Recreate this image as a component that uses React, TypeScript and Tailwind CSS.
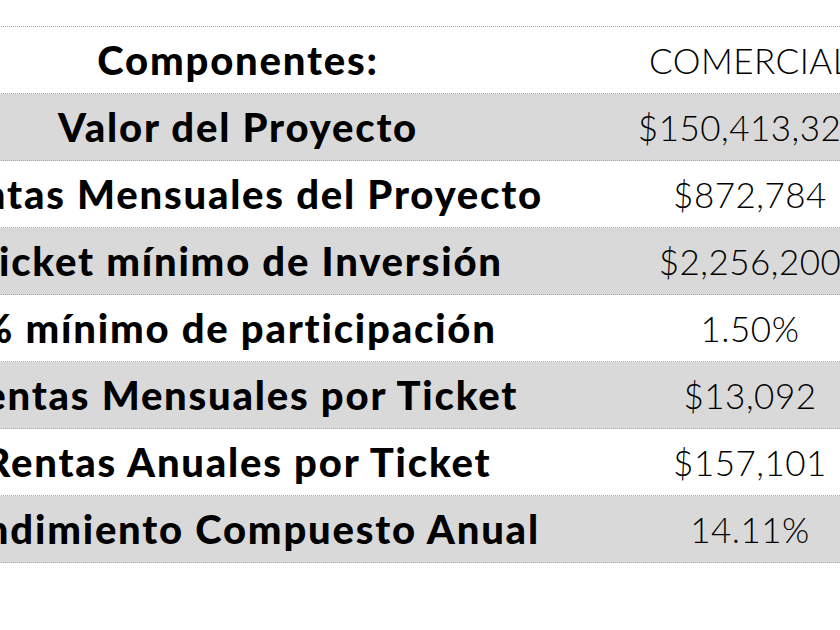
const rows: [string, string][] = [
  ["Componentes:", "COMERCIAL"],
  ["Valor del Proyecto", "$150,413,320"],
  ["Rentas Mensuales del Proyecto", "$872,784"],
  ["Ticket mínimo de Inversión", "$2,256,200"],
  ["% mínimo de participación", "1.50%"],
  ["Rentas Mensuales por Ticket", "$13,092"],
  ["Rentas Anuales por Ticket", "$157,101"],
  ["Rendimiento Compuesto Anual", "14.11%"],
];

export default function App() {
  return (
    <div className="w-[840px] h-[630px] overflow-hidden bg-white font-['Lato',sans-serif] text-black">
      <div className="ml-[-100px] w-[1024px] pt-[26px]">
        <div className="border-t border-dotted border-[#a6a6a6]">
          {rows.map(([label, value], i) => (
            <div
              key={label}
              className={`grid grid-cols-[676px_348px] h-[67px] items-center border-b border-dotted border-[#a6a6a6] ${
                i % 2 === 1 ? "bg-[#d9d9d9]" : "bg-white"
              }`}
            >
              <div className="text-center text-[40px] font-black tracking-[1.8px] whitespace-nowrap leading-none">
                {label}
              </div>
              <div className="text-center text-[35px] font-light tracking-[0.5px] whitespace-nowrap leading-none">
                {value}
              </div>
            </div>
          ))}
        </div>
      </div>
    </div>
  );
}
